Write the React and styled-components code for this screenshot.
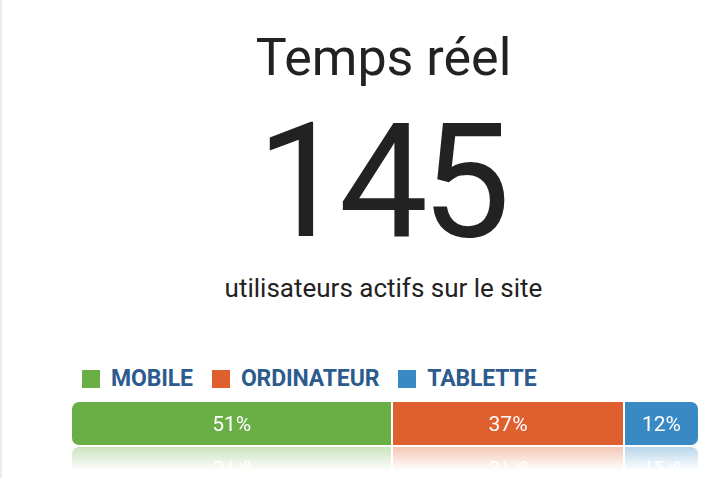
import styled, { createGlobalStyle } from 'styled-components';

const GlobalStyle = createGlobalStyle`
	html, body {
		margin: 0;
		padding: 0;
		background: #fff;
	}

	body {
		font-family: Roboto, 'Liberation Sans', sans-serif;
		color: #222;
	}
`;

const devices = [
	{ label: 'MOBILE', color: '#6aae46', share: 51 },
	{ label: 'ORDINATEUR', color: '#df5f2e', share: 37 },
	{ label: 'TABLETTE', color: '#3889c4', share: 12 },
];

const App = () => {
	return (
		<>
			<GlobalStyle />
			<StyledPanel>
				<h1 className="title">Temps réel</h1>
				<div className="count">145</div>
				<p className="caption">utilisateurs actifs sur le site</p>

				<Legend>
					{devices.map(d => (
						<LegendItem key={d.label} $color={d.color}>
							{d.label}
						</LegendItem>
					))}
				</Legend>

				<Bar>
					{devices.map(d => (
						<Segment key={d.label} $color={d.color} style={{ width: `${d.share}%` }}>
							{d.share}%
						</Segment>
					))}
				</Bar>
			</StyledPanel>
		</>
	);
};

export default App;

const StyledPanel = styled.section`
	height: 478px;
	box-sizing: border-box;
	border-left: 2px solid #ececec;
	padding: 22px 30px 0 70px;
	display: flex;
	flex-direction: column;
	align-items: center;

	.title {
		margin: 0;
		padding-right: 3px;
		font-size: 52px;
		font-weight: 400;
		line-height: 72px;
		color: #222;
	}

	.count {
		margin-top: 8px;
		padding-right: 10px;
		font-size: 159px;
		font-weight: 400;
		line-height: 160px;
		letter-spacing: -7px;
		color: #222;
	}

	.caption {
		margin: 11px 0 0;
		padding-right: 3px;
		font-size: 26px;
		line-height: 30px;
		color: #222;
	}
`;

const Legend = styled.div`
	align-self: stretch;
	display: flex;
	align-items: center;
	gap: 19px;
	margin-top: 62px;
	padding-left: 10px;
`;

const LegendItem = styled.span`
	display: flex;
	align-items: center;
	font-size: 23px;
	font-weight: 700;
	letter-spacing: -0.15px;
	color: #2c5b8e;

	&::before {
		content: '';
		width: 18px;
		height: 18px;
		margin-right: 11px;
		background: ${p => p.$color};
	}
`;

const Bar = styled.div`
	align-self: stretch;
	display: flex;
	height: 43px;
	margin-top: 10px;
	border-radius: 7px;
	overflow: hidden;
	-webkit-box-reflect: below 2px linear-gradient(transparent 45%, rgba(255, 255, 255, 0.35));
`;

const Segment = styled.div`
	display: flex;
	align-items: center;
	justify-content: center;
	box-sizing: border-box;
	background: ${p => p.$color};
	color: #fff;
	font-size: 21px;

	& + & {
		border-left: 2px solid #fff;
	}
`;
